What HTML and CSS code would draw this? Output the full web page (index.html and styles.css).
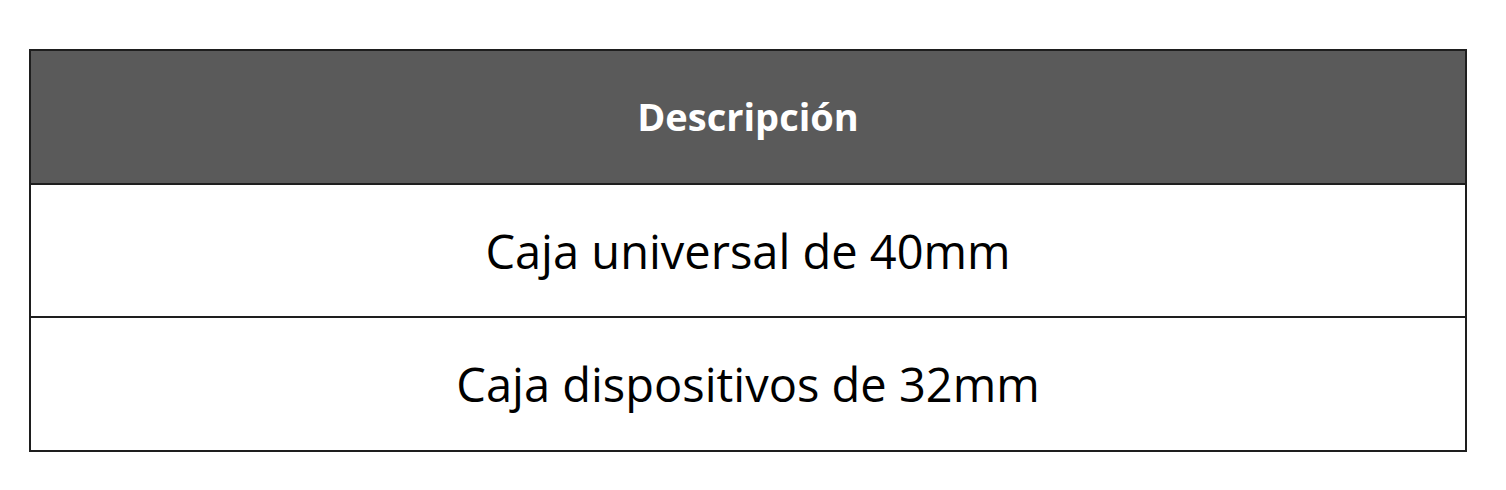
FILE: index.html
```html
<!DOCTYPE html>
<html lang="es">
<head>
<meta charset="utf-8">
<title>Descripción</title>
<link rel="stylesheet" href="styles.css">
</head>
<body>
<div class="table">
  <div class="head">Descripción</div>
  <div class="row">Caja universal de 40mm</div>
  <div class="row last">Caja dispositivos de 32mm</div>
</div>
</body>
</html>
```
FILE: styles.css
```css
html, body {
  margin: 0;
  padding: 0;
  background: #ffffff;
}
body {
  padding: 49px 0 0 29px;
  font-family: "Open Sans", "Noto Sans", sans-serif;
}
.table {
  width: 1434px;
  border: 2px solid #1e1e1e;
  display: flex;
  flex-direction: column;
}
.head {
  height: 134px;
  padding-bottom: 2px;
  box-sizing: border-box;
  background: #5a5a5a;
  color: #ffffff;
  font-weight: 700;
  font-size: 38px;
  display: flex;
  align-items: center;
  justify-content: center;
  border-bottom: 2px solid #1e1e1e;
}
.row {
  height: 131px;
  color: #000000;
  font-size: 47px;
  display: flex;
  align-items: center;
  justify-content: center;
  border-bottom: 2px solid #1e1e1e;
}
.row.last {
  height: 132px;
  border-bottom: none;
}
```
